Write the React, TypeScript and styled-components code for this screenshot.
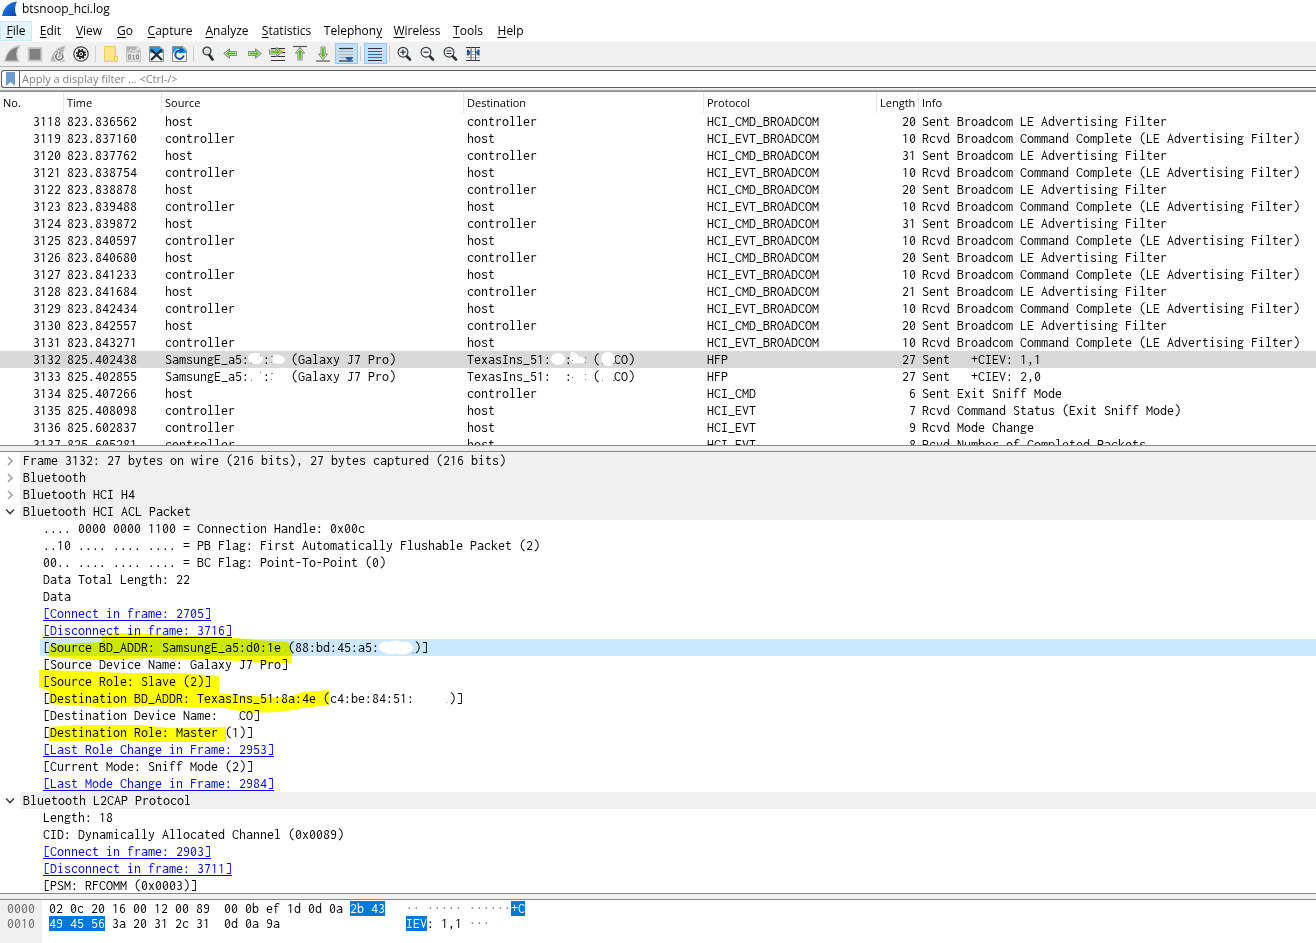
import React from "react";
import styled, { createGlobalStyle, css } from "styled-components";

const mono = `"Inconsolata", "Noto Sans Mono CJK SC", "DejaVu Sans Mono", monospace`;
const ui = `"Open Sans", "Noto Sans", sans-serif`;

const GlobalStyle = createGlobalStyle`
  * { box-sizing: border-box; }
  body { margin: 0; background: #fff; color: #000; font-family: ${ui}; font-size: 11px; }
`;

const Window = styled.div`
  display: flex;
  flex-direction: column;
  height: 100vh;
  overflow: hidden;
`;

const TitleBar = styled.header`
  display: flex;
  align-items: center;
  gap: 4px;
  height: 21px;
  padding: 0 0 3px 2px;
`;

const Title = styled.h1`
  margin: 0;
  font-size: 12px;
  font-weight: 400;
  line-height: 18px;
`;

const MenuBar = styled.nav`
  display: flex;
  height: 20px;
`;

const MenuItem = styled.button<{ $width: number; $active?: boolean }>`
  width: ${(p) => p.$width}px;
  height: 20px;
  padding: 0;
  border: 1px solid ${(p) => (p.$active ? "#cce8ff" : "transparent")};
  background: ${(p) => (p.$active ? "#e5f3ff" : "transparent")};
  color: #000;
  font: 12px/18px ${ui};
  white-space: nowrap;
`;

const Mnemonic = styled.span`
  text-decoration: underline;
  text-underline-offset: 2px;
`;

const ToolBar = styled.div`
  display: flex;
  align-items: center;
  height: 26px;
  padding: 0 0 1px 1px;
  background: #f0f0f0;
  border-top: 1px solid #f7f7f7;
  border-bottom: 1px solid #b4b4b4;
`;

const ToolButton = styled.button<{ $on?: boolean }>`
  display: flex;
  align-items: center;
  justify-content: center;
  width: 23px;
  height: 21px;
  padding: 0;
  border: 1px solid ${(p) => (p.$on ? "#90c8f6" : "transparent")};
  background: ${(p) => (p.$on ? "#c2dff5" : "transparent")};
`;

const Divider = styled.span`
  width: 1px;
  height: 16px;
  margin: 0 3px 0 2px;
  background: #cfcfcf;
`;

const FilterBar = styled.div`
  height: 25px;
  padding: 3px 0 2px 1px;
  background: #f0f0f0;
  border-bottom: 2px solid #9a9a9e;
`;

const FilterBox = styled.div`
  display: flex;
  height: 18px;
  background: #fff;
  border: 1px solid #5c5c5c;
  border-right: 0;
  border-radius: 3px 0 0 3px;
`;

const Bookmark = styled.button`
  display: flex;
  align-items: center;
  justify-content: center;
  width: 18px;
  padding: 0;
  border: 0;
  border-right: 1px solid #5c5c5c;
  background: transparent;
`;

const FilterInput = styled.input`
  flex: 1;
  min-width: 0;
  padding: 0 2px;
  border: 0;
  outline: 0;
  background: transparent;
  font: 11px/16px ${ui};
  &::placeholder { color: #808080; opacity: 1; }
`;

const Pane = styled.section<{ $share: number }>`
  position: relative;
  flex: ${(p) => p.$share} 1 0;
  min-height: 0;
  overflow: hidden;
  background: #fff;
`;

const Splitter = styled.div`
  flex: none;
  height: 7px;
  background: #f0f0f0;
  border-top: 1px solid #828790;
  border-bottom: 1px solid #828790;
`;

const PacketTable = styled.table`
  width: 100%;
  table-layout: fixed;
  border-collapse: separate;
  border-spacing: 0;
  font: 14px/17px ${mono};
`;

const Column = styled.col<{ $width?: number }>`
  ${(p) => p.$width && css`width: ${p.$width}px;`}
`;

const HeadCell = styled.th`
  height: 21px;
  padding: 0 0 0 3px;
  border-right: 1px solid #e5e5e5;
  font: 11px/21px ${ui};
  text-align: left;
  white-space: nowrap;
  &:last-child { border-right: 0; }
`;

const PacketRow = styled.tr<{ $selected?: boolean }>`
  background: ${(p) => (p.$selected ? "#d9d9d9" : "transparent")};
`;

const Cell = styled.td<{ $right?: boolean }>`
  position: relative;
  height: 17px;
  padding: 0 3px;
  line-height: 17px;
  text-align: ${(p) => (p.$right ? "right" : "left")};
  white-space: pre;
`;

const Overlay = styled.svg`
  position: absolute;
  top: 0;
  left: 0;
  pointer-events: none;
`;

const Marker = styled(Overlay)`
  mix-blend-mode: multiply;
`;

const Tree = styled.ul`
  margin: 0;
  padding: 0;
  list-style: none;
  font: 14px/17px ${mono};
`;

const Branch = styled.li`
  display: flex;
`;

const Toggle = styled.button`
  display: flex;
  align-items: center;
  justify-content: center;
  width: 20px;
  height: 17px;
  padding: 0;
  border: 0;
  background: transparent;
`;

const BranchLabel = styled.span`
  flex: 1;
  padding-left: 3px;
  background: #f0f0f0;
  white-space: pre;
`;

const Leaf = styled.li<{ $selected?: boolean }>`
  height: 17px;
  margin-left: 40px;
  padding-left: 3px;
  background: ${(p) => (p.$selected ? "#cce8ff" : "transparent")};
  white-space: pre;
`;

const FrameLink = styled.a`
  color: #0000ff;
  text-decoration: underline;
  text-underline-offset: 2px;
`;

const HexView = styled.div`
  display: flex;
  height: 100%;
  font: 14px/15px ${mono};
  white-space: pre;
`;

const HexColumn = styled.div`
  padding: 1px 0 0 7px;
`;

const Offsets = styled(HexColumn)`
  width: 42px;
  background: #f0f0f0;
  color: #6a6a6a;
`;

const Ascii = styled(HexColumn)`
  margin-left: 14px;
`;

const HexLine = styled.div`
  height: 15px;
`;

const Picked = styled.mark`
  background: #0078d7;
  color: #fff;
`;

const Dots = styled.span`
  color: #808080;
`;

const FIN = "M.8 16.2C2 9 6.500 2 15.500 1C12.500 5 12 10.500 14.500 16.200Z";
const ARROW = "M1 8.500L6.500 4V6.500H13.500V10.500H6.500V13Z";
const PAGE = "M1.500 1.500H12L15.500 5V16.500H1.500Z";

const Green = ({ transform }: { transform?: string }) => (
  <g transform={transform}>
    <path d={ARROW} fill="#fff" stroke="#8a8d87" strokeWidth="1.100" strokeLinejoin="round" />
    <path d="M3 8.500L5.800 6.300V7.700H12.300V9.300H5.800V10.700Z" fill="#4eb80a" stroke="#4eb80a" strokeWidth=".4" />
  </g>
);

const Lens = ({ children }: { children?: React.ReactNode }) => (
  <>
    <path d="M10.500 11L14 14.500" stroke="#2e3436" strokeWidth="2.600" strokeLinecap="round" />
    <circle cx="7" cy="7.200" r="4.900" fill="#f4f4f4" stroke="#3c4244" strokeWidth="1.200" />
    <g stroke="#2e3436" strokeWidth="1.200">{children}</g>
  </>
);

const icons: Record<string, React.ReactNode> = {
  "Start capture": <path d={FIN} fill="#808080" stroke="#c6c6c6" strokeWidth="1.400" />,
  "Stop capture": <rect x="1.700" y="3" width="12.600" height="12.600" fill="#808080" stroke="#c6c6c6" strokeWidth="1.800" />,
  "Restart capture": (
    <>
      <path d={FIN} fill="#b0b0b0" stroke="#c6c6c6" />
      <path d="M7 9A3.400 3.400 0 1 0 12 9.500" fill="none" stroke="#fff" strokeWidth="3.600" />
      <path d="M7 9A3.400 3.400 0 1 0 12 9.500" fill="none" stroke="#777" strokeWidth="1.600" />
      <path d="M8.500 5.500L12 8L8.500 10.500Z" fill="#888" stroke="#fff" strokeWidth=".6" />
    </>
  ),
  "Capture options": (
    <>
      <circle cx="8" cy="9" r="7.200" fill="#f0f0f0" stroke="#444" strokeWidth="1.200" />
      <circle cx="8" cy="9" r="3.700" fill="#111" />
      <circle cx="8" cy="9" r="4.300" fill="none" stroke="#111" strokeWidth="1.600" strokeDasharray="1.690 1.690" />
      <circle cx="8" cy="9" r="2.100" fill="#f4f4f4" />
      <circle cx="8" cy="9" r="1" fill="#222" />
    </>
  ),
  "Open file": (
    <>
      <path d="M2.500 1.500H13.500V11H15V16.500H2.500Z" fill="#fee38b" stroke="#f2cd5b" />
      <path d="M12.500 11.500V16.500H15V11.500Z" fill="#fff0b5" stroke="#e9bf45" strokeWidth=".8" />
    </>
  ),
  "Save file": (
    <>
      <path d={PAGE} fill="#e2e2e2" stroke="#c4c4c4" />
      <path d="M2 2H11.500V5.500H15V7.500H2Z" fill="#b5b5b5" />
      <path d="M4 7L6.500 4.500L8 6.500L11 5V7.500" fill="none" stroke="#eee" />
      <g fill="none" stroke="#969696" strokeWidth="1.100">
        <rect x="3.500" y="10" width="2" height="4" />
        <path d="M7.500 10.500H8.600V14.500M7.300 14.200H10" />
        <rect x="11.500" y="10" width="2" height="4" />
      </g>
    </>
  ),
  "Close file": (
    <>
      <path d={PAGE} fill="#f4f4e8" stroke="#8a9090" />
      <path d="M2 2H11.500L15 5.500V8H2Z" fill="#2497e0" />
      <path d="M3 15L14 4.500M3 4.500L14 15" stroke="#1d2b33" strokeWidth="2.300" />
    </>
  ),
  "Reload file": (
    <>
      <path d={PAGE} fill="#f4f4e8" stroke="#8a9090" />
      <path d="M2 2H11.500L15 5.500V8H2Z" fill="#2497e0" />
      <path d="M12.500 10.500A4.200 4.200 0 1 1 9 5.500" fill="none" stroke="#fff" strokeWidth="3.200" />
      <path d="M12.700 10.500A4.200 4.200 0 1 1 9 5.500" fill="none" stroke="#1c4f9c" strokeWidth="2" />
      <path d="M8.500 2.500L13.500 5.500L8.500 8.500Z" fill="#1c4f9c" />
    </>
  ),
  "Find packet": (
    <>
      <path d="M9 9.500L12.500 14.500" stroke="#222" strokeWidth="2.600" strokeLinecap="round" />
      <circle cx="7" cy="6" r="3.900" fill="#d7dadb" stroke="#3c4244" strokeWidth="1.400" />
      <path d="M4.800 6A2.300 2.300 0 0 1 7 3.800" fill="none" stroke="#fff" />
    </>
  ),
  "Go back": <Green />,
  "Go forward": <Green transform="matrix(-1 0 0 1 16 0)" />,
  "Go to packet": (
    <>
      <rect x="10" y="4" width="6" height="5" fill="#fce94f" />
      <path d="M2 3.500H16M2 11.500H16M2 15.500H16M11 7.500H16" stroke="#2e3436" strokeWidth="1.200" />
      <Green transform="matrix(-1 0 0 1 14 -1.500)" />
    </>
  ),
  "First packet": (
    <>
      <path d="M1 1.500H15" stroke="#555753" strokeWidth="1.200" />
      <Green transform="matrix(0 1 1 0 -.5 1.500)" />
    </>
  ),
  "Last packet": (
    <>
      <path d="M1 16H15" stroke="#555753" strokeWidth="1.200" />
      <Green transform="matrix(0 -1 1 0 -.5 15.500)" />
    </>
  ),
  "Auto scroll": (
    <>
      <path d="M1 3.500H15" stroke="#2e3436" strokeWidth="1.200" />
      <path d="M1 6.500H15M1 9.500H15M1 12.500H15" stroke="#b4b8b2" />
      <path d="M1 16H15" stroke="#2e3436" strokeWidth="1.200" />
      <path d="M7.500 12H15L14 14.500H13L11.200 16.500L9.500 14.500H8.500Z" fill="#2459a4" />
    </>
  ),
  Colorize: (
    <>
      <path d="M1 3.500H15M1 15.500H15" stroke="#2e3436" />
      <path d="M1 6.500H15" stroke="#e02020" />
      <path d="M1 9.500H15" stroke="#3465a4" />
      <path d="M1 12.500H15" stroke="#75507b" />
    </>
  ),
  "Zoom in": <Lens><path d="M4.300 7.200H9.700M7 4.500V9.900" /></Lens>,
  "Zoom out": <Lens><path d="M4.300 7.200H9.700" /></Lens>,
  "Normal size": <Lens><path d="M4.500 6H9.500M4.500 8.500H9.500" /></Lens>,
  "Resize columns": (
    <>
      <path d="M1 6.500H15M1 9.500H15M1 12.500H15" stroke="#b4b8b2" />
      <path d="M1 2.500H15M1 15.500H15" stroke="#2e3436" />
      <path d="M6 2V16M10.500 2V16" stroke="#555753" />
      <path d="M2 4.500H3.500L5.500 7.500L3.500 10.500H2ZM14.500 4.500H13L11 7.500L13 10.500H14.500Z" fill="#2459a4" />
    </>
  ),
};

const toolGroups = [
  ["Start capture", "Stop capture", "Restart capture", "Capture options"],
  ["Open file", "Save file", "Close file", "Reload file"],
  ["Find packet", "Go back", "Go forward", "Go to packet", "First packet", "Last packet", "Auto scroll"],
  ["Colorize"],
  ["Zoom in", "Zoom out", "Normal size", "Resize columns"],
];

const menus: [string, number, number][] = [
  ["File", 0, 32], ["Edit", 0, 37], ["View", 0, 40], ["Go", 0, 32], ["Capture", 0, 58], ["Analyze", 0, 56],
  ["Statistics", 0, 63], ["Telephony", 8, 70], ["Wireless", 0, 58], ["Tools", 0, 44], ["Help", 0, 41],
];

const LE = "Broadcom LE Advertising Filter";
const DONE = "Broadcom Command Complete (LE Advertising Filter)";
const CMD = "HCI_CMD_BROADCOM";
const EVT = "HCI_EVT_BROADCOM";

type Packet = [string, string, string, string, string, number, string];

const broadcom: [string, number][] = [
  ["823.836562", 20], ["823.837160", 10], ["823.837762", 31], ["823.838754", 10], ["823.838878", 20],
  ["823.839488", 10], ["823.839872", 31], ["823.840597", 10], ["823.840680", 20], ["823.841233", 10],
  ["823.841684", 21], ["823.842434", 10], ["823.842557", 20], ["823.843271", 10],
];

const packets: Packet[] = [
  ...broadcom.map(([time, len], i): Packet =>
    i % 2 === 0
      ? [String(3118 + i), time, "host", "controller", CMD, len, `Sent ${LE}`]
      : [String(3118 + i), time, "controller", "host", EVT, len, `Rcvd ${DONE}`]
  ),
  ["3132", "825.402438", "SamsungE_a5:  :   (Galaxy J7 Pro)", "TexasIns_51:  :   (  CO)", "HFP", 27, "Sent   +CIEV: 1,1"],
  ["3133", "825.402855", "SamsungE_a5:  :   (Galaxy J7 Pro)", "TexasIns_51:  :   (  CO)", "HFP", 27, "Sent   +CIEV: 2,0"],
  ["3134", "825.407266", "host", "controller", "HCI_CMD", 6, "Sent Exit Sniff Mode"],
  ["3135", "825.408098", "controller", "host", "HCI_EVT", 7, "Rcvd Command Status (Exit Sniff Mode)"],
  ["3136", "825.602837", "controller", "host", "HCI_EVT", 9, "Rcvd Mode Change"],
  ["3137", "825.605281", "controller", "host", "HCI_EVT", 8, "Rcvd Number of Completed Packets"],
];

const SourceSmudge = ({ filled }: { filled?: boolean }) => (
  <Overlay width="140" height="17" aria-hidden="true">
    {filled && (
      <>
        <path d="M86 6Q88 1 95 2Q101 3 101 8Q99 14 93 13Q86 13 86 6Z" fill="#fff" />
        <path d="M110 5Q115 2 119 5Q123 6 123 9Q122 13 117 13L111 12Z" fill="#fff" />
      </>
    )}
    <path d="M109 5.500H111M109 11.500H110M98 4.500H99M89 12.500H90" stroke="#777" />
  </Overlay>
);

const DestinationSmudge = ({ filled }: { filled?: boolean }) => (
  <Overlay width="180" height="17" aria-hidden="true">
    {filled && (
      <>
        <ellipse cx="94" cy="8" rx="7" ry="6" fill="#fff" />
        <path d="M107 1Q113 1 114 5Q121 6 121 10Q120 13 114 12Q108 13 106 9Z" fill="#fff" />
        <ellipse cx="144" cy="8" rx="7" ry="7" fill="#fff" />
      </>
    )}
    <path d="M108 9.500H109M121 6.500H122M121 11.500H122M138 12.500H139M149 12.500H151" stroke="#777" />
  </Overlay>
);

type Node = { kind: "branch"; text: string; open?: boolean } | { kind: "leaf" | "link"; text: string; selected?: boolean };

const tree: Node[] = [
  { kind: "branch", text: "Frame 3132: 27 bytes on wire (216 bits), 27 bytes captured (216 bits)" },
  { kind: "branch", text: "Bluetooth" },
  { kind: "branch", text: "Bluetooth HCI H4" },
  { kind: "branch", text: "Bluetooth HCI ACL Packet", open: true },
  { kind: "leaf", text: ".... 0000 0000 1100 = Connection Handle: 0x00c" },
  { kind: "leaf", text: "..10 .... .... .... = PB Flag: First Automatically Flushable Packet (2)" },
  { kind: "leaf", text: "00.. .... .... .... = BC Flag: Point-To-Point (0)" },
  { kind: "leaf", text: "Data Total Length: 22" },
  { kind: "leaf", text: "Data" },
  { kind: "link", text: "[Connect in frame: 2705]" },
  { kind: "link", text: "[Disconnect in frame: 3716]" },
  { kind: "leaf", text: "[Source BD_ADDR: SamsungE_a5:d0:1e (88:bd:45:a5:     )]", selected: true },
  { kind: "leaf", text: "[Source Device Name: Galaxy J7 Pro]" },
  { kind: "leaf", text: "[Source Role: Slave (2)]" },
  { kind: "leaf", text: "[Destination BD_ADDR: TexasIns_51:8a:4e (c4:be:84:51:     )]" },
  { kind: "leaf", text: "[Destination Device Name:   CO]" },
  { kind: "leaf", text: "[Destination Role: Master (1)]" },
  { kind: "link", text: "[Last Role Change in Frame: 2953]" },
  { kind: "leaf", text: "[Current Mode: Sniff Mode (2)]" },
  { kind: "link", text: "[Last Mode Change in Frame: 2984]" },
  { kind: "branch", text: "Bluetooth L2CAP Protocol", open: true },
  { kind: "leaf", text: "Length: 18" },
  { kind: "leaf", text: "CID: Dynamically Allocated Channel (0x0089)" },
  { kind: "link", text: "[Connect in frame: 2903]" },
  { kind: "link", text: "[Disconnect in frame: 3711]" },
  { kind: "leaf", text: "[PSM: RFCOMM (0x0003)]" },
];

const Chevron = ({ open }: { open?: boolean }) => (
  <svg width="10" height="10" viewBox="0 0 10 10" fill="none" strokeWidth="1.600">
    {open ? <path d="M1 2.500L5 6.500L9 2.500" stroke="#404040" /> : <path d="M3 1L7 5L3 9" stroke="#a0a0a0" />}
  </svg>
);

export default function App() {
  return (
    <Window>
      <GlobalStyle />
      <TitleBar>
        <svg width="16" height="16" viewBox="0 0 16 16" aria-hidden="true">
          <defs>
            <linearGradient id="fin" x1="0" y1="0" x2="1" y2="1">
              <stop offset="0" stopColor="#1e8be8" />
              <stop offset="1" stopColor="#0b3fb4" />
            </linearGradient>
          </defs>
          <path d="M0 15C1 8 6 1 15 .5C12.500 5 12.500 10 14.500 15Z" fill="url(#fin)" />
        </svg>
        <Title>btsnoop_hci.log</Title>
      </TitleBar>

      <MenuBar>
        {menus.map(([name, key, width]) => (
          <MenuItem key={name} $width={width} $active={name === "File"}>
            {name.slice(0, key)}
            <Mnemonic>{name[key]}</Mnemonic>
            {name.slice(key + 1)}
          </MenuItem>
        ))}
      </MenuBar>

      <ToolBar role="toolbar">
        {toolGroups.map((group, i) => (
          <React.Fragment key={group[0]}>
            {i > 0 && <Divider />}
            {group.map((name) => (
              <ToolButton key={name} aria-label={name} $on={name === "Auto scroll" || name === "Colorize"}>
                <svg width="17" height="17" viewBox="0 0 17 17" fill="none">{icons[name]}</svg>
              </ToolButton>
            ))}
          </React.Fragment>
        ))}
      </ToolBar>

      <FilterBar>
        <FilterBox>
          <Bookmark aria-label="Filter bookmarks">
            <svg width="9" height="14" viewBox="0 0 9 14"><path d="M0 0H9V14L4.500 10L0 14Z" fill="#6f9bd3" /></svg>
          </Bookmark>
          <FilterInput aria-label="Display filter" placeholder="Apply a display filter … <Ctrl-/>" />
        </FilterBox>
      </FilterBar>

      <Pane $share={353}>
        <PacketTable>
          <colgroup>
            <Column $width={64} /><Column $width={98} /><Column $width={302} /><Column $width={240} />
            <Column $width={173} /><Column $width={42} /><Column />
          </colgroup>
          <thead>
            <tr>
              {["No.", "Time", "Source", "Destination", "Protocol", "Length", "Info"].map((h) => (
                <HeadCell key={h}>{h}</HeadCell>
              ))}
            </tr>
          </thead>
          <tbody>
            {packets.map(([no, time, source, destination, protocol, length, info]) => (
              <PacketRow key={no} $selected={no === "3132"}>
                <Cell $right>{no}</Cell>
                <Cell>{time}</Cell>
                <Cell>{source}{protocol === "HFP" && <SourceSmudge filled={no === "3132"} />}</Cell>
                <Cell>{destination}{protocol === "HFP" && <DestinationSmudge filled={no === "3132"} />}</Cell>
                <Cell>{protocol}</Cell>
                <Cell $right>{length}</Cell>
                <Cell>{info}</Cell>
              </PacketRow>
            ))}
          </tbody>
        </PacketTable>
      </Pane>
      <Splitter />

      <Pane $share={441}>
        <Tree>
          {tree.map((node, i) =>
            node.kind === "branch" ? (
              <Branch key={i}>
                <Toggle aria-label={node.text} aria-expanded={!!node.open}><Chevron open={node.open} /></Toggle>
                <BranchLabel>{node.text}</BranchLabel>
              </Branch>
            ) : (
              <Leaf key={i} $selected={node.selected}>
                {node.kind === "link" ? <FrameLink href="#frame">{node.text}</FrameLink> : node.text}
              </Leaf>
            )
          )}
        </Tree>
        <Marker width="480" height="441" aria-hidden="true">
          <g fill="#ffff00">
            <path d="M102 183L126 181L190 184L237 186L256 188L288 190L292 198V211H262L225 208L150 206L96 208L49 205V193L102 190Z" />
            <path d="M39 218L80 219L127 221L175 221L219 224V241H190L150 242L96 241L49 239L39 235Z" />
            <path d="M49 239L125 239L190 239L240 243L286 246L303 240L329 238V253L303 256L280 260L250 261L225 256L160 254L100 255L49 252Z" />
            <path d="M49 275L78 273L140 273L170 276L226 275V289L212 290L150 290L120 288L100 289L49 289Z" />
          </g>
        </Marker>
        <Overlay width="480" height="300" aria-hidden="true">
          <path d="M379 194Q382 188 389 190Q396 187 401 190Q409 188 412 194Q415 198 408 201Q402 204 397 201Q389 204 384 200Q378 199 379 194Z" fill="#fff" />
          <path d="M413 200V202M447 250V251M238 267H240" stroke="#999" />
        </Overlay>
      </Pane>
      <Splitter />

      <Pane $share={43}>
        <HexView>
          <Offsets>
            <HexLine>0000</HexLine>
            <HexLine>0010</HexLine>
          </Offsets>
          <HexColumn>
            <HexLine>02 0c 20 16 00 12 00 89  00 0b ef 1d 0d 0a <Picked>2b 43</Picked></HexLine>
            <HexLine><Picked>49 45 56</Picked> 3a 20 31 2c 31  0d 0a 9a</HexLine>
          </HexColumn>
          <Ascii>
            <HexLine><Dots>·· ····· ······</Dots><Picked>+C</Picked></HexLine>
            <HexLine><Picked>IEV</Picked>: 1,1 <Dots>···</Dots></HexLine>
          </Ascii>
        </HexView>
      </Pane>
    </Window>
  );
}
